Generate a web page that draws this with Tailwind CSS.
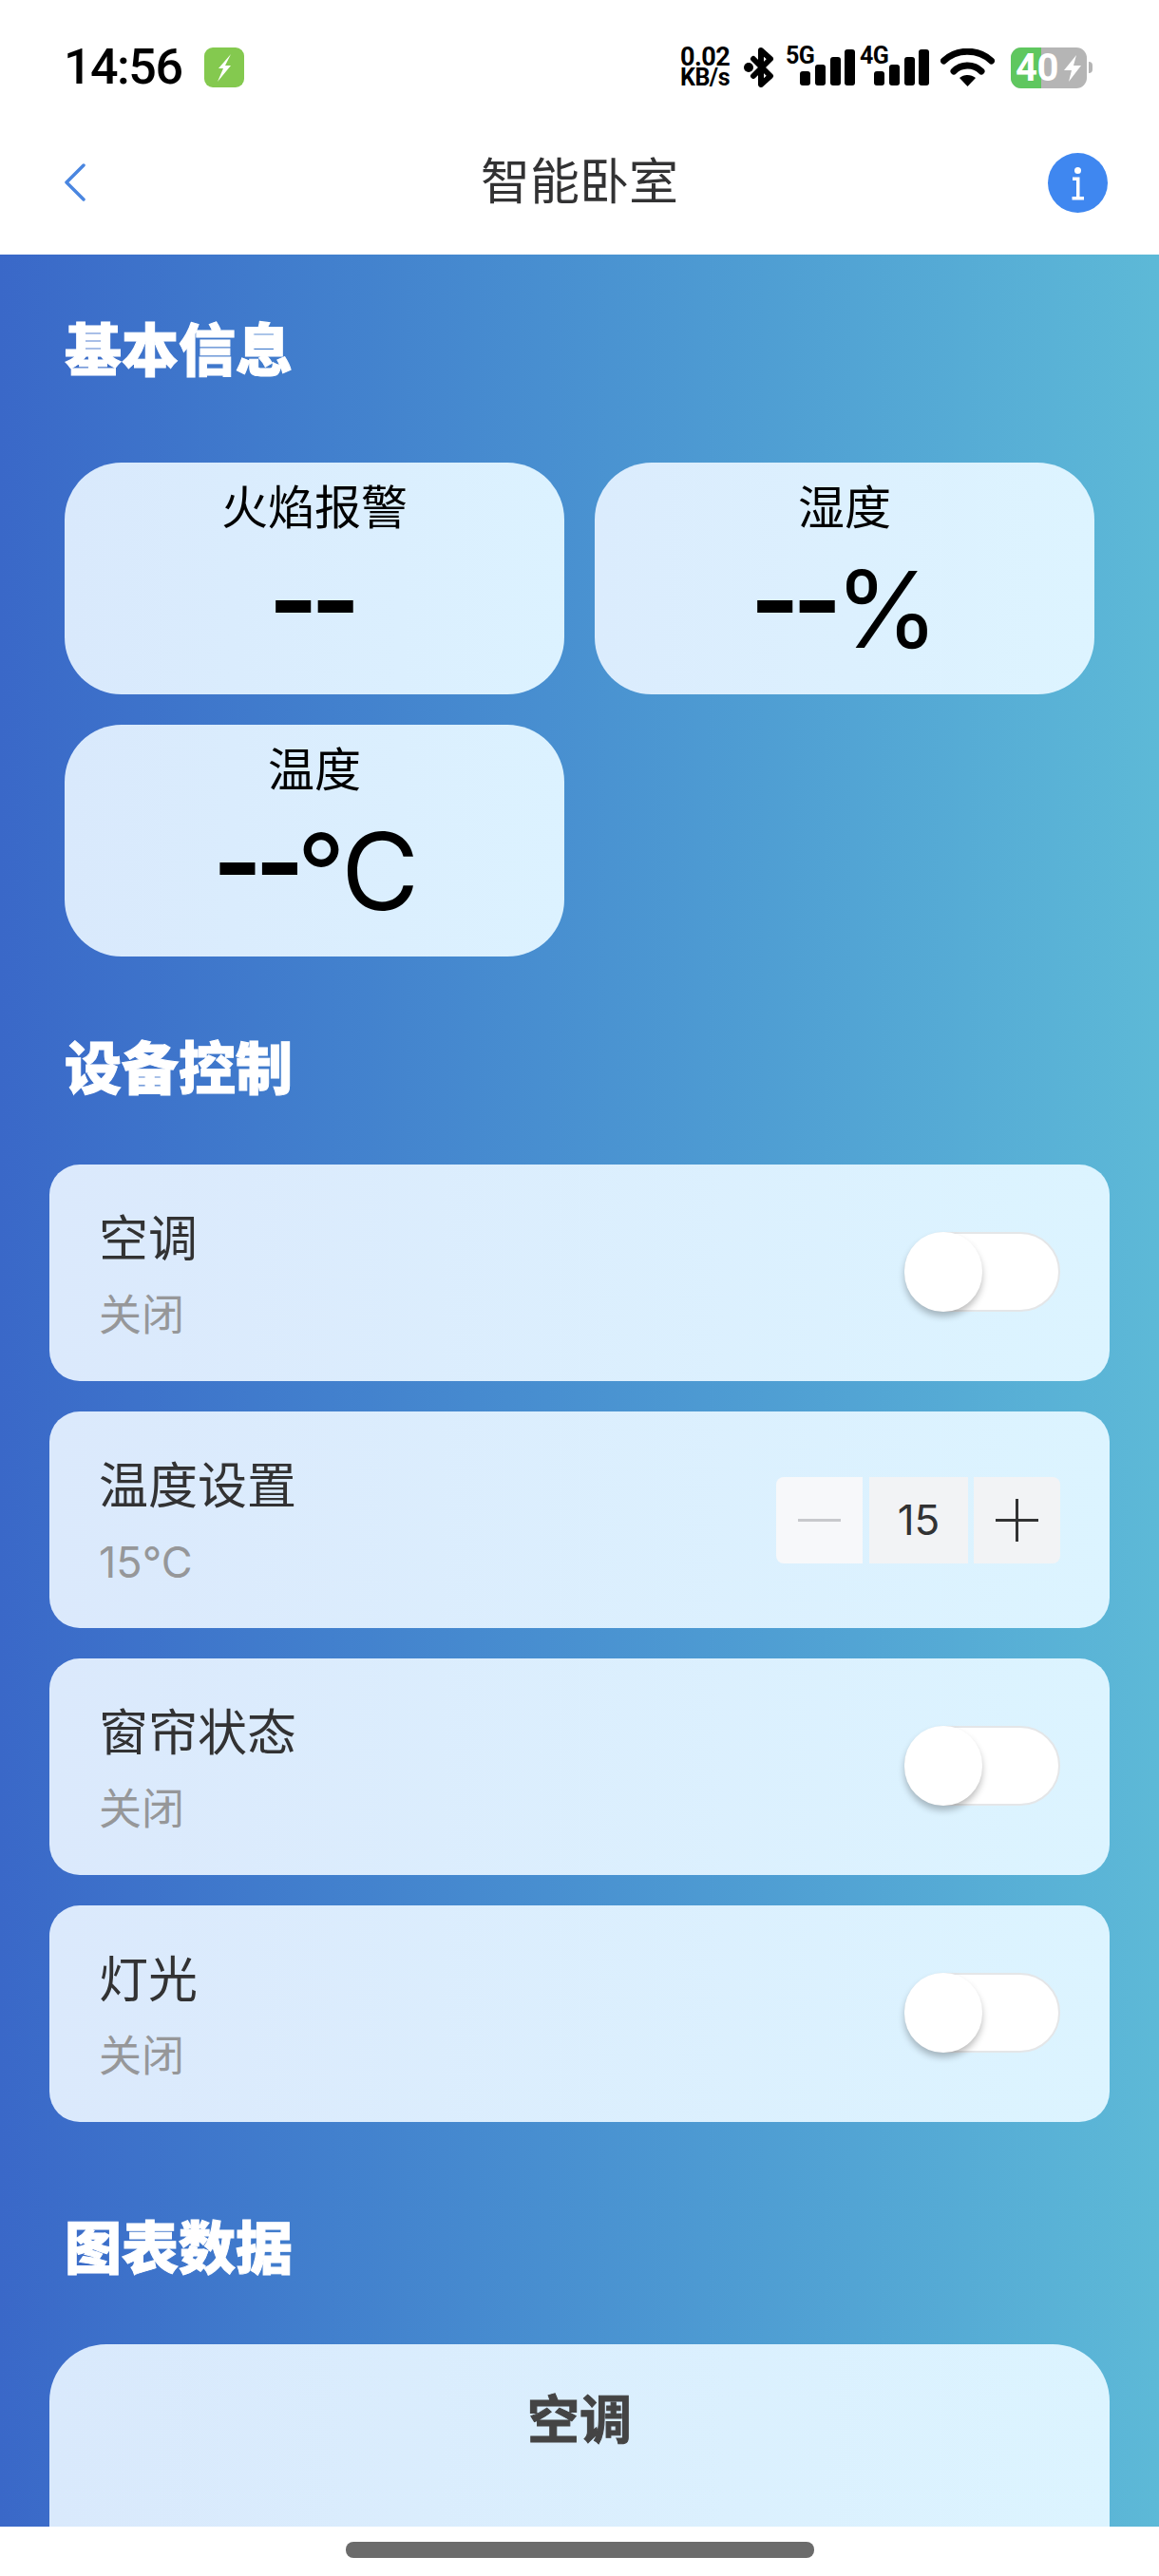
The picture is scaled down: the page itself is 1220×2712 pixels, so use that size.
<!DOCTYPE html>
<html lang="zh-CN">

<head>
    <meta charset="UTF-8">
    <meta name="viewport" content="width=device-width, initial-scale=1.0">
    <title>智能卧室</title>
    <script src="https://cdn.jsdelivr.net/npm/@tailwindcss/browser@4"></script>
</head>

<body class="w-[1220px] h-[2712px] overflow-hidden flex flex-col bg-white font-['Inter','Noto_Sans_CJK_SC',sans-serif]">
    <!-- status bar + nav -->
    <header class="h-[268px] shrink-0 bg-white">
        <div class="flex items-center justify-between h-[44px] mt-[49px] pl-[67px] pr-[70px]">
            <div class="flex items-center gap-[24px]">
                <span class="text-[52px] leading-[44px] font-medium text-black tracking-[-1.5px] font-['Roboto',sans-serif]">14:56</span>
                <div class="w-[42px] h-[42px] rounded-[9px] bg-[#84c94f] flex items-center justify-center">
                    <svg width="42" height="42" viewBox="0 0 42 42"><path d="M28 7 L15 22 L20 22 L14 36 L28 19 L22 19 Z" fill="#fff"/></svg>
                </div>
            </div>
            <div class="flex items-center">
                <div class="w-[59px] mr-[8px] flex flex-col text-black font-bold font-['Roboto',sans-serif]">
                    <span class="text-[27px] leading-[22px] tracking-[-0.5px]">0.02</span>
                    <span class="text-[25px] leading-[22px] tracking-[-0.5px]">KB/s</span>
                </div>
                <svg class="mr-[10px]" width="34" height="42" viewBox="0 0 34 42" fill="none">
                    <path d="M10 12 L28 30 L18 39 V3 L28 12 L10 30" stroke="#000" stroke-width="6" stroke-linejoin="round" stroke-linecap="round"/>
                    <circle cx="5" cy="21" r="5" fill="#000"/>
                </svg>
                <div class="relative w-[73px] h-[42px] mr-[5px]">
                    <span class="absolute left-0 top-[-3px] text-[25px] leading-[24px] font-bold tracking-[-0.5px] font-['Roboto',sans-serif]">5G</span>
                    <svg class="absolute left-0 top-0" width="73" height="42" viewBox="0 0 73 42">
                        <rect x="15" y="25" width="11" height="15" rx="3"/><rect x="31" y="18" width="11" height="22" rx="3"/><rect x="47" y="10" width="11" height="30" rx="3"/><rect x="62" y="2" width="11" height="38" rx="3"/>
                    </svg>
                </div>
                <div class="relative w-[73px] h-[42px] mr-[12px]">
                    <span class="absolute left-0 top-[-3px] text-[25px] leading-[24px] font-bold tracking-[-0.5px] font-['Roboto',sans-serif]">4G</span>
                    <svg class="absolute left-0 top-0" width="73" height="42" viewBox="0 0 73 42">
                        <rect x="15" y="25" width="11" height="15" rx="3"/><rect x="31" y="18" width="11" height="22" rx="3"/><rect x="47" y="10" width="11" height="30" rx="3"/><rect x="62" y="2" width="11" height="38" rx="3"/>
                    </svg>
                </div>
                <svg class="mr-[17px]" width="57" height="40" viewBox="0 0 57 40" fill="none">
                    <path d="M3.5 13 C17 0 40 0 53.5 13" stroke="#000" stroke-width="7" stroke-linecap="round"/>
                    <path d="M14 24 C22 16 35 16 43 24" stroke="#000" stroke-width="7" stroke-linecap="round"/>
                    <path d="M20 31 C25 27 32 27 37 31 L28.5 40 Z" fill="#000"/>
                </svg>
                <div class="flex items-center">
                    <div class="relative w-[80px] h-[43px]">
                        <div class="absolute inset-0 rounded-[11px] overflow-hidden flex bg-[#b5b5b5]">
                            <div class="w-[32px] bg-[#5fc75f]"></div>
                        </div>
                        <span class="absolute left-[5px] top-0 text-[40px] leading-[43px] font-bold text-white tracking-[-0.5px] font-['Roboto',sans-serif]">40</span>
                        <svg class="absolute left-[55px] top-[8px]" width="20" height="28" viewBox="0 0 20 28"><path d="M14 0 L1 16 L9 16 L6 28 L19 11 L11 11 Z" fill="#fff"/></svg>
                    </div>
                    <div class="w-[4px] h-[12px] ml-[2px] rounded-r-full bg-[#b5b5b5]"></div>
                </div>
            </div>
        </div>
        <div class="grid grid-cols-[1fr_auto_1fr] items-center h-[64px] mt-[67px] px-[54px]">
            <svg class="ml-[13px]" width="23" height="40" viewBox="0 0 23 40" fill="none"><path d="M21 2 L3 20 L21 38" stroke="#4a86e0" stroke-width="3.5" stroke-linecap="round" stroke-linejoin="round"/></svg>
            <h1 class="text-[52px] leading-[64px] text-[#323233]">智能卧室</h1>
            <div class="justify-self-end w-[63px] h-[63px] rounded-full bg-[#3f87f0] flex items-center justify-center">
                <svg width="63" height="63" viewBox="0 0 63 63" fill="#fff">
                    <circle cx="31.5" cy="18.5" r="3.5"/>
                    <path d="M26 25.5 H33.5 V46 H38 V49.5 H25.5 V46 H30 V29 H26 Z"/>
                </svg>
            </div>
        </div>
    </header>

    <main class="flex-1 min-h-0 overflow-hidden bg-gradient-to-r from-[#3a68c8] to-[#5db9d7] pt-[71px]">
        <h2 class="px-[68px] text-[60px] leading-[60px] font-black text-white [-webkit-text-stroke:1px_white]">基本信息</h2>
        <section class="grid grid-cols-2 gap-[32px] px-[68px] mt-[88px]">
            <div class="h-[244px] rounded-[60px] bg-gradient-to-r from-[#d9e9fc] to-[#dcf2ff] flex flex-col items-center pt-[20px] text-black">
                <span class="text-[49px] leading-[56px]">火焰报警</span>
                <span class="mt-[18px] text-[112px] leading-[120px]"><span class="inline-block font-bold tracking-[-8px] -translate-y-[10px] pr-[8px]">--</span></span>
            </div>
            <div class="h-[244px] rounded-[60px] bg-gradient-to-r from-[#dbecfd] to-[#ddf4ff] flex flex-col items-center pt-[20px] text-black">
                <span class="text-[49px] leading-[56px]">湿度</span>
                <span class="mt-[18px] text-[112px] leading-[120px]"><span class="inline-block font-bold tracking-[-8px] -translate-y-[10px]">--</span>%</span>
            </div>
            <div class="h-[244px] rounded-[60px] bg-gradient-to-r from-[#d9e9fc] to-[#dcf2ff] flex flex-col items-center pt-[20px] text-black">
                <span class="text-[49px] leading-[56px]">温度</span>
                <span class="mt-[18px] text-[112px] leading-[120px] tracking-[-3px]"><span class="inline-block font-bold tracking-[-8px] -translate-y-[10px]">--</span>°C</span>
            </div>
        </section>

        <h2 class="px-[68px] mt-[88px] text-[60px] leading-[60px] font-black text-white [-webkit-text-stroke:1px_white]">设备控制</h2>
        <section class="flex flex-col gap-[32px] px-[52px] mt-[71px]">
            <div class="h-[228px] rounded-[32px] bg-gradient-to-r from-[#dbe9fc] to-[#dcf4ff] flex items-center justify-between pl-[52px] pr-[52px]">
                <div class="pt-[6px]">
                    <p class="text-[52px] leading-[72px] text-[#323233]">空调</p>
                    <p class="mt-[12px] text-[45px] leading-[64px] text-[#969799]">关闭</p>
                </div>
                <div class="relative w-[164px] h-[84px] -mt-[2px] rounded-full bg-white border-2 border-[#e4e6e8]">
                    <div class="absolute left-[-2px] top-[-2px] w-[82px] h-[84px] rounded-full bg-white shadow-[0_5px_7px_rgba(0,0,0,0.25)]"></div>
                </div>
            </div>
            <div class="h-[228px] rounded-[32px] bg-gradient-to-r from-[#dbe9fc] to-[#dcf4ff] flex items-center justify-between pl-[52px] pr-[52px]">
                <div class="pt-[6px]">
                    <p class="text-[52px] leading-[72px] text-[#323233]">温度设置</p>
                    <p class="mt-[12px] text-[45px] leading-[64px] text-[#969799]">15°C</p>
                </div>
                <div class="flex items-center">
                    <div class="w-[91px] h-[91px] rounded-l-[8px] bg-[#f7f8fa] flex items-center justify-center">
                        <div class="w-[45px] h-[3px] bg-[#c8c9cc]"></div>
                    </div>
                    <div class="w-[104px] h-[91px] ml-[7px] bg-[#f2f3f5] flex items-center justify-center text-[44px] text-[#323233]">15</div>
                    <div class="relative w-[91px] h-[91px] ml-[6px] rounded-r-[8px] bg-[#f2f3f5] flex items-center justify-center">
                        <div class="w-[45px] h-[3px] bg-[#323233]"></div>
                        <div class="absolute w-[3px] h-[45px] bg-[#323233]"></div>
                    </div>
                </div>
            </div>
            <div class="h-[228px] rounded-[32px] bg-gradient-to-r from-[#dbe9fc] to-[#dcf4ff] flex items-center justify-between pl-[52px] pr-[52px]">
                <div class="pt-[6px]">
                    <p class="text-[52px] leading-[72px] text-[#323233]">窗帘状态</p>
                    <p class="mt-[12px] text-[45px] leading-[64px] text-[#969799]">关闭</p>
                </div>
                <div class="relative w-[164px] h-[84px] -mt-[2px] rounded-full bg-white border-2 border-[#e4e6e8]">
                    <div class="absolute left-[-2px] top-[-2px] w-[82px] h-[84px] rounded-full bg-white shadow-[0_5px_7px_rgba(0,0,0,0.25)]"></div>
                </div>
            </div>
            <div class="h-[228px] rounded-[32px] bg-gradient-to-r from-[#dbe9fc] to-[#dcf4ff] flex items-center justify-between pl-[52px] pr-[52px]">
                <div class="pt-[6px]">
                    <p class="text-[52px] leading-[72px] text-[#323233]">灯光</p>
                    <p class="mt-[12px] text-[45px] leading-[64px] text-[#969799]">关闭</p>
                </div>
                <div class="relative w-[164px] h-[84px] -mt-[2px] rounded-full bg-white border-2 border-[#e4e6e8]">
                    <div class="absolute left-[-2px] top-[-2px] w-[82px] h-[84px] rounded-full bg-white shadow-[0_5px_7px_rgba(0,0,0,0.25)]"></div>
                </div>
            </div>
        </section>

        <h2 class="px-[68px] mt-[103px] text-[60px] leading-[60px] font-black text-white [-webkit-text-stroke:1px_white]">图表数据</h2>
        <section class="mx-[52px] mt-[71px] h-[400px] rounded-[60px] bg-gradient-to-r from-[#d9e9fc] to-[#dcf4ff] pt-[47px] text-center">
            <h3 class="text-[55px] leading-[64px] font-bold text-[#444] [-webkit-text-stroke:1px_#444]">空调</h3>
        </section>
    </main>

    <footer class="h-[52px] shrink-0 bg-white pt-[16px]">
        <div class="mx-auto w-[493px] h-[17px] rounded-[8px] bg-[#6b6b6b]"></div>
    </footer>
</body>

</html>
